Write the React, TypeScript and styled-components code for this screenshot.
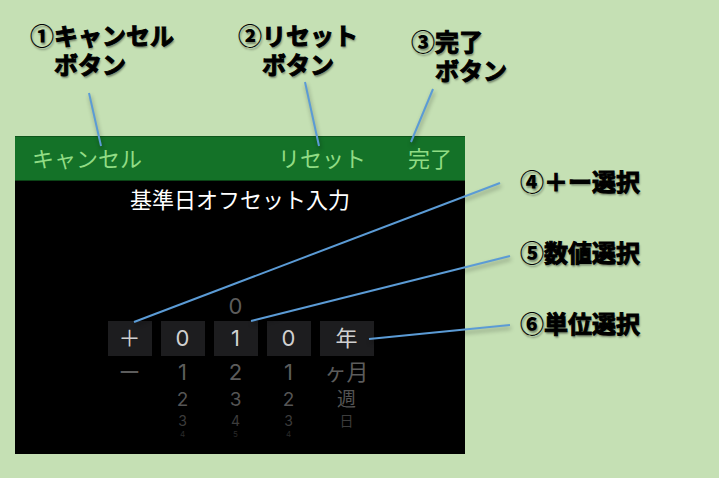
import React, { useState } from "react";
import styled, { createGlobalStyle } from "styled-components";

const GlobalStyle = createGlobalStyle`
  *, *::before, *::after { box-sizing: border-box; }
  body {
    margin: 0;
    background: #c5e0b4;
    font-family: "Noto Sans CJK JP", "Noto Sans", sans-serif;
  }
`;

const Page = styled.main`
  position: relative;
  min-height: 100vh;
  padding-bottom: 24px;
  background: #c5e0b4;
`;

const TopNotes = styled.div`
  display: grid;
  grid-template-columns: 208fr 173fr 308fr;
  height: 136px;
  padding: 20px 0 0 30px;
`;

const Body = styled.div`
  display: grid;
  grid-template-columns: 450fr 254fr;
  padding-left: 15px;
`;

const SideNotes = styled.div`
  display: flex;
  flex-direction: column;
  gap: 42px;
  padding: 30px 0 0 55px;
`;

const Note = styled.p<{ $lowered?: boolean }>`
  margin: 0;
  padding-top: ${(p) => (p.$lowered ? "6px" : "0")};
  color: #000;
  font-size: 24px;
  font-weight: 700;
  line-height: 29px;
  white-space: nowrap;
  text-shadow: 1px 2px 2px rgba(0, 0, 0, 0.4);
  -webkit-text-stroke: 1px #000;
`;

const Mark = styled.span`
  font-weight: 900;
  -webkit-text-stroke: 0;
`;

const SecondLine = styled.span`
  display: block;
  padding-left: 24px;
`;

const Panel = styled.section`
  display: flex;
  flex-direction: column;
  min-height: 318px;
  background: #000;
`;

const Toolbar = styled.header`
  display: flex;
  align-items: center;
  height: 45px;
  padding: 0 13px 4px 17px;
  border-top: 1px solid #0d561b;
  border-bottom: 1px solid #0b4316;
  background: #147228;
`;

const ToolButton = styled.button<{ $push?: boolean }>`
  margin: 0 0 0 ${(p) => (p.$push ? "auto" : "42px")};
  padding: 0;
  border: 0;
  background: none;
  color: #91dc84;
  font: 400 22px/32px "Noto Sans CJK JP", sans-serif;
  white-space: nowrap;
  cursor: pointer;

  &:first-child { margin-left: 0; }
`;

const Title = styled.h1`
  margin: 0;
  color: #fff;
  font-size: 22px;
  font-weight: 400;
  line-height: 34px;
  text-align: center;
`;

const Picker = styled.div`
  display: flex;
  justify-content: center;
  gap: 9px;
  padding: 76px 0 16px 1px;
`;

const Wheel = styled.div<{ $wide?: boolean }>`
  display: flex;
  flex-direction: column;
  width: ${(p) => (p.$wide ? "54px" : "44px")};
`;

type Slot = { height: number; size: number; color: string };

const slots: Slot[] = [
  { height: 30, size: 22, color: "#5c5c5c" },
  { height: 35, size: 22, color: "#d0d0d0" },
  { height: 32, size: 22, color: "#5c5c5c" },
  { height: 24, size: 19, color: "#555" },
  { height: 18, size: 14, color: "#3c3c3c" },
  { height: 8, size: 8, color: "#2a2a2a" },
];

const Choice = styled.button<{ $slot: Slot; $current: boolean }>`
  display: flex;
  align-items: center;
  justify-content: center;
  width: 100%;
  height: ${(p) => p.$slot.height}px;
  padding: 0;
  border: 0;
  background: ${(p) => (p.$current ? "#1d1d1f" : "transparent")};
  color: ${(p) => p.$slot.color};
  font-family: Inter, "Noto Sans CJK JP", sans-serif;
  font-size: ${(p) => p.$slot.size}px;
  font-weight: 400;
  line-height: ${(p) => p.$slot.height}px;
  white-space: nowrap;
  cursor: pointer;
`;

const EmptySlot = styled.div<{ $slot: Slot }>`
  height: ${(p) => p.$slot.height}px;
`;

const Leaders = styled.svg`
  position: absolute;
  top: 0;
  left: 0;
  width: 100%;
  height: 478px;
  pointer-events: none;
  filter: drop-shadow(1px 3px 2px rgba(0, 0, 0, 0.35));
`;

const digits = ["0", "1", "2", "3", "4", "5", "6", "7", "8", "9"];

const wheels = [
  { label: "符号", values: ["＋", "ー"], start: 0 },
  { label: "百の位", values: digits, start: 0 },
  { label: "十の位", values: digits, start: 1 },
  { label: "一の位", values: digits, start: 0 },
  { label: "単位", values: ["年", "ヶ月", "週", "日"], start: 0, wide: true },
];

const startValues = wheels.map((w) => w.start);

const leaders = [
  "M89 93L101 146",
  "M305 82L319 146",
  "M433 89L411 142",
  "M500 183L134 322",
  "M510 256L251 321",
  "M510 325L369 339",
];

export default function App() {
  const [picked, setPicked] = useState(startValues);

  const pick = (wheel: number, value: number) =>
    setPicked((all) => all.map((v, i) => (i === wheel ? value : v)));

  return (
    <>
      <GlobalStyle />
      <Page>
        <TopNotes>
          <Note>
            <Mark>①</Mark>キャンセル<SecondLine>ボタン</SecondLine>
          </Note>
          <Note>
            <Mark>②</Mark>リセット<SecondLine>ボタン</SecondLine>
          </Note>
          <Note $lowered>
            <Mark>③</Mark>完了<SecondLine>ボタン</SecondLine>
          </Note>
        </TopNotes>
        <Body>
          <Panel>
            <Toolbar>
              <ToolButton>キャンセル</ToolButton>
              <ToolButton $push onClick={() => setPicked(startValues)}>
                リセット
              </ToolButton>
              <ToolButton>完了</ToolButton>
            </Toolbar>
            <Title>基準日オフセット入力</Title>
            <Picker>
              {wheels.map((wheel, w) => (
                <Wheel key={wheel.label} role="listbox" aria-label={wheel.label} $wide={wheel.wide}>
                  {slots.map((slot, s) => {
                    const index = picked[w] + s - 1;
                    const value = wheel.values[index];
                    return value === undefined ? (
                      <EmptySlot key={s} $slot={slot} />
                    ) : (
                      <Choice
                        key={s}
                        role="option"
                        aria-selected={s === 1}
                        $slot={slot}
                        $current={s === 1}
                        onClick={() => pick(w, index)}
                      >
                        {value}
                      </Choice>
                    );
                  })}
                </Wheel>
              ))}
            </Picker>
          </Panel>
          <SideNotes>
            <Note><Mark>④</Mark>＋ー選択</Note>
            <Note><Mark>⑤</Mark>数値選択</Note>
            <Note><Mark>⑥</Mark>単位選択</Note>
          </SideNotes>
        </Body>
        <Leaders viewBox="0 0 719 478" preserveAspectRatio="none" aria-hidden="true">
          {leaders.map((d) => (
            <path key={d} d={d} fill="none" stroke="#5b9bd5" strokeWidth="2" />
          ))}
        </Leaders>
      </Page>
    </>
  );
}
